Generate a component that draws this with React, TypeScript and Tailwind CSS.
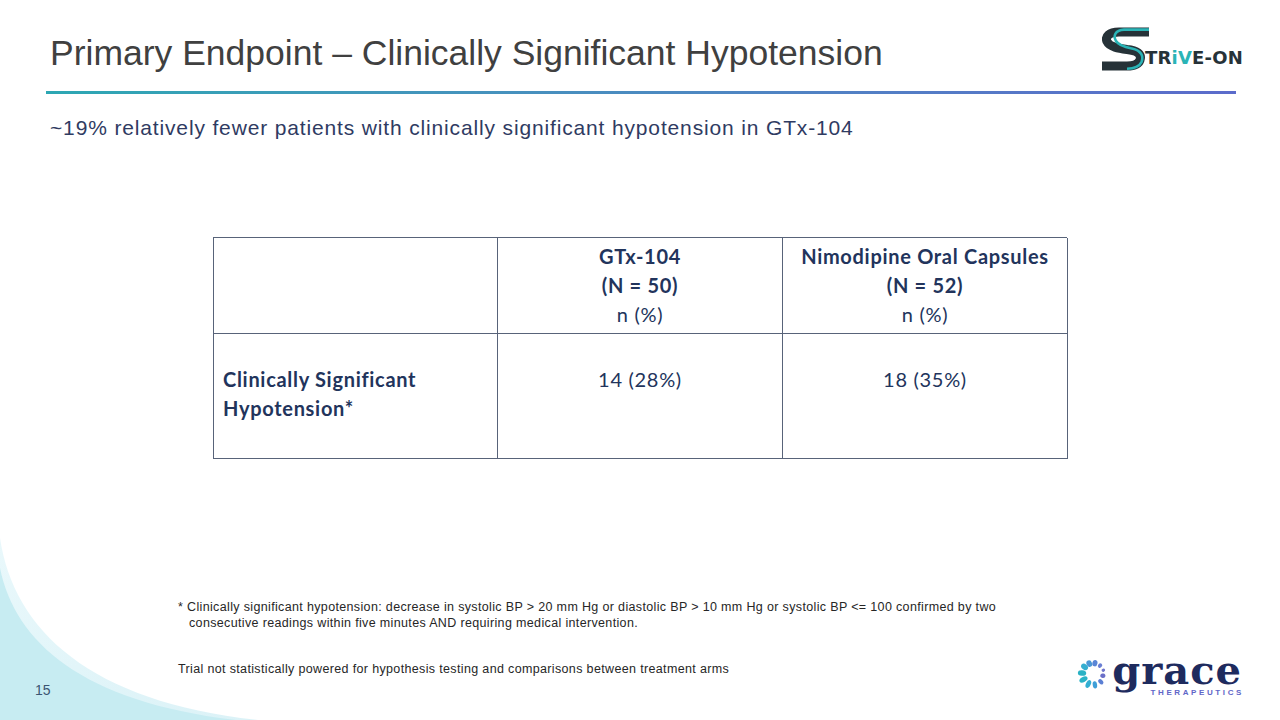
import React from "react";

const petals: { a: number; r: number; rx: number; ry: number; c: string }[] = [
  { a: -80, r: 11, rx: 3.2, ry: 2.6, c: "#5a86d6" },
  { a: -50, r: 11, rx: 2.4, ry: 2.0, c: "#6a7fd4" },
  { a: -20, r: 11, rx: 1.8, ry: 1.6, c: "#7076cc" },
  { a: 10, r: 10, rx: 2.6, ry: 2.2, c: "#6b6fc8" },
  { a: 45, r: 11, rx: 3.0, ry: 2.0, c: "#5b7fd4" },
  { a: 80, r: 11, rx: 3.6, ry: 2.2, c: "#3f9fd8" },
  { a: 115, r: 11, rx: 4.2, ry: 2.4, c: "#33aed2" },
  { a: 150, r: 11, rx: 4.4, ry: 2.6, c: "#2bb3c6" },
  { a: 185, r: 11, rx: 4.2, ry: 2.8, c: "#2ab2c4" },
  { a: 220, r: 11, rx: 3.8, ry: 2.8, c: "#35aed0" },
  { a: 250, r: 11, rx: 3.4, ry: 2.8, c: "#4a98d6" },
];

function Flower() {
  return (
    <svg width="32" height="32" viewBox="-16 -16 32 32">
      {petals.map((p, i) => {
        const rad = (p.a * Math.PI) / 180;
        const x = Math.cos(rad) * p.r;
        const y = Math.sin(rad) * p.r;
        return (
          <ellipse
            key={i}
            cx={x}
            cy={y}
            rx={p.rx}
            ry={p.ry}
            fill={p.c}
            transform={`rotate(${p.a} ${x} ${y})`}
          />
        );
      })}
    </svg>
  );
}

function StriveLogo() {
  return (
    <div className="relative w-[142px] h-[44px]">
      <svg className="absolute left-0 top-0" width="48" height="44" viewBox="0 0 48 44">
        <path
          d="M47,5 L17,5 C7,5 3,9.5 5,14.5 C7.5,20 17,21.5 25,22.5 C35,23.5 40,27 38,33 C36.5,37.5 32,39 25,39 L0,39"
          fill="none"
          stroke="#263238"
          strokeWidth="9"
        />
        <path
          d="M47,2.6 L22,2.6 C13,3.2 11,9 14,14 C17,19 25,20.5 30,21.5 C39,23.5 42,29 39.5,35 C37.5,39.5 32,41.5 25,41.8"
          fill="none"
          stroke="#2ab4b6"
          strokeWidth="2.6"
        />
      </svg>
      <div
        className="absolute left-[43px] top-[20px] text-[18px] leading-[22px] font-bold text-[#263238] whitespace-nowrap tracking-[0.2px]"
        style={{ fontFamily: '"DejaVu Sans", sans-serif' }}
      >
        TR<span className="text-[#2ab4b6]">iV</span>E-ON
      </div>
    </div>
  );
}

export default function App() {
  return (
    <div
      className="relative w-[1280px] h-[720px] overflow-hidden bg-white"
      style={{ fontFamily: '"Liberation Sans", Arial, sans-serif' }}
    >
      <svg className="absolute left-0 bottom-0" width="270" height="190" viewBox="0 530 270 190">
        <defs>
          <linearGradient id="band" x1="0" y1="0" x2="1" y2="1">
            <stop offset="0" stopColor="#e9f8fb" />
            <stop offset="1" stopColor="#dbf2f7" />
          </linearGradient>
        </defs>
        <path d="M0,538 C14,632 92,702 258,720 L0,720 Z" fill="url(#band)" />
        <path d="M0,568 C15,642 82,702 236,720 L0,720 Z" fill="#c7ecf2" />
      </svg>

      <div className="relative flex flex-col h-full">
        <div className="flex items-start justify-between">
          <div className="pl-[50px] pt-[33px] text-[35.5px] leading-[40px] text-[#404040] whitespace-nowrap">
            Primary Endpoint – Clinically Significant Hypotension
          </div>
          <div className="pt-[27px] pr-[36px]">
            <StriveLogo />
          </div>
        </div>

        <div className="ml-[46px] mt-[18px] w-[1190px] h-[3px] bg-gradient-to-r from-[#2ca7b3] to-[#5b6bcb]" />

        <div className="pl-[50px] mt-[22px] text-[21px] leading-[24px] tracking-[0.85px] text-[#2f3b62] whitespace-nowrap">
          ~19% relatively fewer patients with clinically significant hypotension in GTx-104
        </div>

        <div
          className="ml-[213px] mt-[97px] w-[854px] grid grid-cols-[284px_285px_285px] border-t-[1.5px] border-l-[1.5px] border-[#586379] text-[#22345c] text-[20px] leading-[29px] tracking-[0.7px]"
          style={{ fontFamily: 'Lato, "Open Sans", sans-serif' }}
        >
          <div className="h-[96px] border-r-[1.5px] border-b-[1.5px] border-[#586379]" />
          <div className="h-[96px] border-r-[1.5px] border-b-[1.5px] border-[#586379] flex flex-col items-center pt-[4px]">
            <div className="font-bold">GTx-104</div>
            <div className="font-bold">(N = 50)</div>
            <div>n (%)</div>
          </div>
          <div className="h-[96px] border-r-[1.5px] border-b-[1.5px] border-[#586379] flex flex-col items-center pt-[4px]">
            <div className="font-bold">Nimodipine Oral Capsules</div>
            <div className="font-bold">(N = 52)</div>
            <div>n (%)</div>
          </div>
          <div className="h-[125px] border-r-[1.5px] border-b-[1.5px] border-[#586379] flex flex-col pl-[9px] pt-[31px] font-bold tracking-[0.7px]">
            <div>Clinically Significant</div>
            <div>Hypotension*</div>
          </div>
          <div className="h-[125px] border-r-[1.5px] border-b-[1.5px] border-[#586379] flex flex-col items-center pt-[31px]">
            14 (28%)
          </div>
          <div className="h-[125px] border-r-[1.5px] border-b-[1.5px] border-[#586379] flex flex-col items-center pt-[31px]">
            18 (35%)
          </div>
        </div>

        <div className="flex items-start mt-[140px]">
          <div className="w-[178px] pl-[35px] pt-[83px] text-[14px] leading-[16px] text-[#3b5573]">15</div>
          <div className="flex-1 text-[12.5px] leading-[16px] tracking-[0.35px] text-[#262626] whitespace-nowrap">
            <div>
              * Clinically significant hypotension: decrease in systolic BP &gt; 20 mm Hg or diastolic BP &gt; 10 mm Hg or
              systolic BP &lt;= 100 confirmed by two
            </div>
            <div className="pl-[11px]">consecutive readings within five minutes AND requiring medical intervention.</div>
            <div className="mt-[30px]">
              Trial not statistically powered for hypothesis testing and comparisons between treatment arms
            </div>
          </div>
          <div className="pt-[52px] pr-[38px] flex items-center gap-[3px]">
            <Flower />
            <div className="flex flex-col items-end">
              <div
                className="text-[40px] leading-[38px] font-bold text-[#1e2b5e] tracking-[1px]"
                style={{ fontFamily: '"DejaVu Serif", serif' }}
              >
                grace
              </div>
              <div className="text-[8px] leading-[8px] font-bold tracking-[2.6px] text-[#5f66c8] mr-[-2px]">
                THERAPEUTICS
              </div>
            </div>
          </div>
        </div>
      </div>
    </div>
  );
}
